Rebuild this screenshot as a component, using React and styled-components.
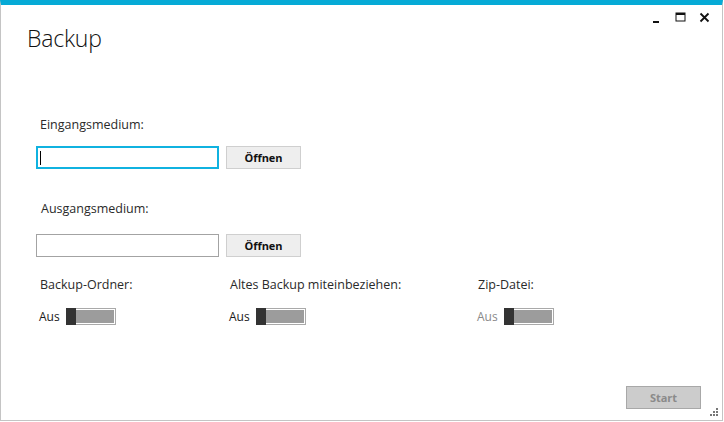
import React from 'react'
import styled, { createGlobalStyle } from 'styled-components'

const GlobalStyle = createGlobalStyle`
  html, body {
    margin: 0;
    padding: 0;
    background: #ffffff;
  }
  body {
    font-family: 'Open Sans', 'Noto Sans', sans-serif;
    color: #1a1a1a;
  }
`

const Window = styled.div`
  box-sizing: border-box;
  width: 723px;
  height: 421px;
  border-top: 5px solid #06aad6;
  border-left: 1px solid #c4c4c4;
  border-right: 1px solid #c4c4c4;
  border-bottom: 1px solid #c4c4c4;
  background: #fff;
  position: relative;
  display: flex;
  flex-direction: column;
`

const TitleBar = styled.div`
  display: flex;
  justify-content: space-between;
  align-items: flex-start;
  padding: 0 11px 0 26px;
  height: 82px;
`

const Title = styled.h1`
  margin: 17px 0 0;
  font-size: 23px;
  font-weight: 300;
  letter-spacing: -0.2px;
  color: #111;
`

const Controls = styled.div`
  display: flex;
  align-items: center;
  gap: 11px;
  margin-top: 6px;
`

const ControlButton = styled.div`
  width: 13px;
  height: 13px;
  display: flex;
  align-items: center;
  justify-content: center;
`

const Form = styled.div`
  display: flex;
  flex-direction: column;
  padding: 0 0 0 35px;
`

const Label = styled.div`
  font-size: 12.5px;
  font-weight: 400;
  color: #2a2a2a;
  padding-left: ${(p) => p.$indent || 4}px;
  margin-top: ${(p) => p.$top || 0}px;
  line-height: 16px;
`

const Row = styled.div`
  display: flex;
  gap: 7px;
  margin-top: ${(p) => p.$top || 0}px;
`

const TextBox = styled.div`
  box-sizing: border-box;
  width: 183px;
  height: 23px;
  border: ${(p) => (p.$focused ? '2px solid #10b2e0' : '1px solid #a3a3a3')};
  background: #fff;
  display: flex;
  align-items: center;
  padding-left: 1px;
`

const Caret = styled.div`
  width: 1px;
  height: 14px;
  background: #000;
  margin-left: 1px;
`

const Button = styled.button`
  box-sizing: border-box;
  width: 75px;
  height: 23px;
  border: 1px solid #cfcfcf;
  background: #eeeeee;
  font-family: 'Open Sans', sans-serif;
  font-weight: 700;
  font-size: 11px;
  color: #111;
  padding: 0;
  cursor: pointer;
`

const ToggleGrid = styled.div`
  display: grid;
  grid-template-columns: 190px 248px 1fr;
  margin-top: 20px;
`

const ToggleCol = styled.div`
  display: flex;
  flex-direction: column;
`

const ToggleRow = styled.div`
  display: flex;
  align-items: center;
  gap: 6px;
  margin-top: 15px;
  padding-left: 3px;
`

const ToggleText = styled.span`
  font-size: 12px;
  font-weight: 400;
  color: ${(p) => (p.$disabled ? '#8a8a8a' : '#1a1a1a')};
  width: 21px;
`

const Switch = styled.div`
  display: flex;
  width: 50px;
  height: 17px;
`

const Thumb = styled.div`
  width: 10px;
  height: 17px;
  background: #333333;
`

const Track = styled.div`
  flex: 1;
  box-sizing: border-box;
  border: 1px solid #a9a9a9;
  border-left: none;
  padding: 1px 1px 1px 0;
  background: #fff;
  display: flex;
`

const TrackFill = styled.div`
  flex: 1;
  background: #9c9c9c;
`

const Footer = styled.div`
  margin-top: auto;
  display: flex;
  justify-content: flex-end;
  padding: 0 21px 11px 0;
`

const StartButton = styled.button`
  box-sizing: border-box;
  width: 75px;
  height: 23px;
  border: 1px solid #a8a8a8;
  background: #cccccc;
  color: #8a8a8a;
  font-family: 'Open Sans', sans-serif;
  font-weight: 700;
  font-size: 11px;
  padding: 0;
`

const Grip = styled.svg`
  position: absolute;
  right: 3px;
  bottom: 3px;
`

function Toggle({ disabled }) {
  return (
    <ToggleRow>
      <ToggleText $disabled={disabled}>Aus</ToggleText>
      <Switch>
        <Thumb />
        <Track>
          <TrackFill />
        </Track>
      </Switch>
    </ToggleRow>
  )
}

export default function App() {
  return (
    <>
      <GlobalStyle />
      <Window>
        <TitleBar>
          <Title>Backup</Title>
          <Controls>
            <ControlButton>
              <svg width="10" height="13" viewBox="0 0 10 13">
                <rect x="1" y="10" width="6" height="2" fill="#111" />
              </svg>
            </ControlButton>
            <ControlButton>
              <svg width="11" height="11" viewBox="0 0 11 11">
                <rect x="1" y="1" width="9" height="8" fill="none" stroke="#111" strokeWidth="1" />
                <rect x="1" y="1" width="9" height="2" fill="#111" />
              </svg>
            </ControlButton>
            <ControlButton>
              <svg width="11" height="11" viewBox="0 0 11 11">
                <path d="M1.5 1.5 L9.5 9.5 M9.5 1.5 L1.5 9.5" stroke="#111" strokeWidth="1.8" />
              </svg>
            </ControlButton>
          </Controls>
        </TitleBar>
        <Form>
          <Label $top={30}>Eingangsmedium:</Label>
          <Row $top={13}>
            <TextBox $focused>
              <Caret />
            </TextBox>
            <Button>Öffnen</Button>
          </Row>
          <Label $top={32} $indent={5}>Ausgangsmedium:</Label>
          <Row $top={17}>
            <TextBox />
            <Button>Öffnen</Button>
          </Row>
          <ToggleGrid>
            <ToggleCol>
              <Label>Backup-Ordner:</Label>
              <Toggle />
            </ToggleCol>
            <ToggleCol>
              <Label>Altes Backup miteinbeziehen:</Label>
              <Toggle />
            </ToggleCol>
            <ToggleCol>
              <Label>Zip-Datei:</Label>
              <Toggle disabled />
            </ToggleCol>
          </ToggleGrid>
        </Form>
        <Footer>
          <StartButton>Start</StartButton>
        </Footer>
        <Grip width="10" height="10" viewBox="0 0 10 10">
          <rect x="7" y="1" width="2" height="2" fill="#777" />
          <rect x="4" y="4" width="2" height="2" fill="#777" />
          <rect x="7" y="4" width="2" height="2" fill="#777" />
          <rect x="1" y="7" width="2" height="2" fill="#777" />
          <rect x="4" y="7" width="2" height="2" fill="#777" />
          <rect x="7" y="7" width="2" height="2" fill="#777" />
        </Grip>
      </Window>
    </>
  )
}
